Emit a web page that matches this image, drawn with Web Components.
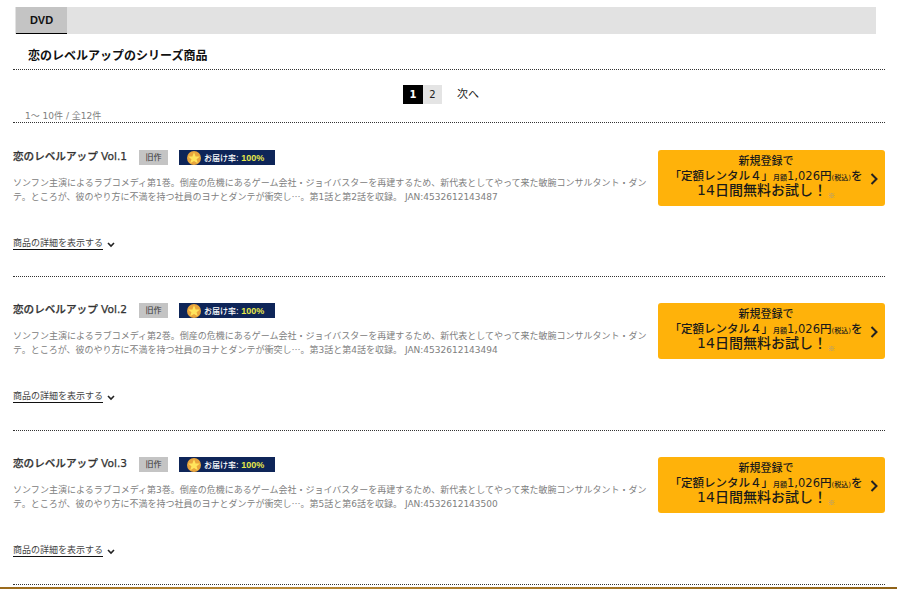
<!DOCTYPE html>
<html lang="ja">
<head>
<meta charset="utf-8">
<title>恋のレベルアップ</title>
<style>
  html, body { margin: 0; height: 589px; overflow: hidden; background: #fff; }
  body { font-family: "DejaVu Sans", "Noto Sans CJK JP", sans-serif; color: #222; }
  .cjk { font-family: "Noto Sans CJK JP", sans-serif; }
</style>
</head>
<body>
<series-page>
  <media-tabs slot="tabs" label="DVD"></media-tabs>
  <series-heading slot="heading">恋のレベルアップのシリーズ商品</series-heading>
  <page-nav slot="nav"></page-nav>
  <product-row title-text="恋のレベルアップ Vol.1">ソンフン主演によるラブコメディ第1巻。倒産の危機にあるゲーム会社・ジョイバスターを再建するため、新代表としてやって来た敏腕コンサルタント・ダン<br>テ。ところが、彼のやり方に不満を持つ社員のヨナとダンテが衝突し<span class="cjk">…</span>。第1話と第2話を収録。 JAN:4532612143487</product-row>
  <product-row title-text="恋のレベルアップ Vol.2">ソンフン主演によるラブコメディ第2巻。倒産の危機にあるゲーム会社・ジョイバスターを再建するため、新代表としてやって来た敏腕コンサルタント・ダン<br>テ。ところが、彼のやり方に不満を持つ社員のヨナとダンテが衝突し<span class="cjk">…</span>。第3話と第4話を収録。 JAN:4532612143494</product-row>
  <product-row title-text="恋のレベルアップ Vol.3">ソンフン主演によるラブコメディ第3巻。倒産の危機にあるゲーム会社・ジョイバスターを再建するため、新代表としてやって来た敏腕コンサルタント・ダン<br>テ。ところが、彼のやり方に不満を持つ社員のヨナとダンテが衝突し<span class="cjk">…</span>。第5話と第6話を収録。 JAN:4532612143500</product-row>
</series-page>

<script>
// ページ全体の枠
class SeriesPage extends HTMLElement {
  constructor() {
    super();
    this.attachShadow({ mode: "open" });
    this.shadowRoot.innerHTML = `
      <style>
        :host { display: flex; flex-direction: column; height: 589px; box-sizing: border-box; padding-top: 7px; }
        .list { padding: 0 12px 0 13px; flex: 1; }
        .band { height: 2px; background: linear-gradient(90deg, #9a6a1c, #b98a3a 30%, #8f6218); }
      </style>
      <slot name="tabs"></slot>
      <div class="list">
        <slot name="heading"></slot>
        <slot name="nav"></slot>
        <slot></slot>
      </div>
      <div class="band"></div>`;
  }
}

// タブバー
class MediaTabs extends HTMLElement {
  constructor() {
    super();
    this.attachShadow({ mode: "open" });
    this.shadowRoot.innerHTML = `
      <style>
        :host { display: flex; margin: 0 21px 0 15px; height: 27px; background: #e2e2e2; }
        .tab { width: 51px; margin-left: 1px; box-sizing: border-box; background: #c4c4c4; border-bottom: 1px solid #000;
          font: bold 11px/26px "Liberation Sans", sans-serif; color: #111; text-align: center; }
      </style>
      <div class="tab"></div>`;
    this.shadowRoot.querySelector(".tab").textContent = this.getAttribute("label");
  }
}

// シリーズ見出し
class SeriesHeading extends HTMLElement {
  constructor() {
    super();
    this.attachShadow({ mode: "open" });
    this.shadowRoot.innerHTML = `
      <style>
        :host { display: block; height: 36px; box-sizing: border-box; padding: 14px 0 0 15px;
          border-bottom: 1px dotted #333; font-size: 12px; line-height: 16px; font-weight: 700; color: #111; }
      </style>
      <slot></slot>`;
  }
}

// ページ送りと件数
class PageNav extends HTMLElement {
  constructor() {
    super();
    this.attachShadow({ mode: "open" });
    this.shadowRoot.innerHTML = `
      <style>
        :host { display: block; height: 53px; box-sizing: border-box; border-bottom: 1px dotted #333; padding-top: 15px; }
        .pages { display: flex; justify-content: center; align-items: center; height: 19px; font-size: 11px; padding-right: 16px; }
        .pages span { width: 20px; height: 19px; line-height: 19px; text-align: center; font-size: 10px; }
        .on { background: #000; color: #fff; font-weight: 700; }
        .off { background: #e4e4e4; color: #222; width: 19px !important; }
        .next { margin-left: 15px; font-size: 11px; line-height: 20px; height: 19px; color: #222; }
        .count { margin: 6px 0 0 12px; font-size: 9px; line-height: 13px; color: #808080; }
      </style>
      <div class="pages"><span class="on">1</span><span class="off">2</span><a class="next">次へ</a></div>
      <div class="count">1～ 10件 / 全12件</div>`;
  }
}

// 商品一行
class ProductRow extends HTMLElement {
  constructor() {
    super();
    this.attachShadow({ mode: "open" });
    this.shadowRoot.innerHTML = `
      <style>
        :host { display: flex; justify-content: space-between; height: 154px; box-sizing: border-box;
          border-bottom: 1px dotted #333; padding-top: 26px; }
        :host(:first-of-type) { padding-top: 27px; }
        .info { width: 640px; }
        .head { display: flex; align-items: flex-start; height: 15px; }
        h3 { margin: -1px 0 0; width: 116px; font-size: 10.6px; font-weight: 500; color: #333; line-height: 15px;
          white-space: nowrap; -webkit-text-stroke: .25px #333; }
        .old { margin-left: 10px; width: 29px; height: 15px; background: #c4c4c4; color: #333; font-size: 8px; line-height: 15px; text-align: center; }
        .rate { margin-left: 11px; width: 96px; height: 15px; background: #0e2558; color: #fff; display: flex; align-items: center;
          font-size: 8px; font-weight: 500; }
        .rate svg { margin: 0 3px 0 8px; flex: none; }
        .rate b { color: #e8e84a; font: bold 9px "Liberation Sans", sans-serif; }
        p { margin: 11px 0 0; width: 640px; font-size: 9px; line-height: 14px; color: #808080; }
        .more { display: flex; align-items: center; margin-top: 33px; font-size: 9px; line-height: 12px; color: #444; }
        .more a { border-bottom: 1px solid #111; }
        .more svg { margin: 2px 0 0 4px; }
        .cta { width: 227px; height: 56px; box-sizing: border-box; background: #ffb20a; border-radius: 3px;
          display: flex; align-items: center; color: #1a1a1a; text-align: center; font-weight: 500; }
        .txt { flex: 1; padding: 0 0 4px 4px; font-size: 11px; white-space: nowrap; }
        .txt div { height: 14px; line-height: 14px; }
        .wide { font-size: 11.5px; }
        .txt small { font-size: 7px; }
        .big { font-size: 14px; }
        .note { font-size: 7px; color: #999; vertical-align: -3px; margin-left: 1px; font-family: "Noto Sans CJK JP", sans-serif; }
        .cta svg { flex: none; margin: 2px 7px 0 0; }
      </style>
      <div class="info">
        <div class="head">
          <h3></h3>
          <span class="old">旧作</span>
          <span class="rate">
            <svg width="14" height="14" viewBox="0 0 13 13"><circle cx="6.5" cy="6.5" r="6.5" fill="#e9a53c"/><polygon points="6.5,1.2 8,5 12,5.2 8.9,7.6 10,11.4 6.5,9.2 3,11.4 4.1,7.6 1,5.2 5,5" fill="#ffe45c"/></svg>
            <span>お届け率: <b>100%</b></span>
          </span>
        </div>
        <p><slot></slot></p>
        <div class="more"><a>商品の詳細を表示する</a>
          <svg width="8" height="6" viewBox="0 0 8 6"><path d="M1 1l3 3 3-3" fill="none" stroke="#222" stroke-width="1.6"/></svg>
        </div>
      </div>
      <div class="cta">
        <div class="txt">
          <div>新規登録で</div>
          <div class="wide">「定額レンタル４」<small>月額</small>1,026円<small>(税込)</small>を</div>
          <div><span class="big">14日間無料お試し！</span><span class="note">※</span></div>
        </div>
        <svg width="8" height="12" viewBox="0 0 8 12"><path d="M1.5 1l5 5-5 5" fill="none" stroke="#222" stroke-width="2"/></svg>
      </div>`;
    this.shadowRoot.querySelector("h3").textContent = this.getAttribute("title-text");
  }
}

customElements.define("series-page", SeriesPage);
customElements.define("media-tabs", MediaTabs);
customElements.define("series-heading", SeriesHeading);
customElements.define("page-nav", PageNav);
customElements.define("product-row", ProductRow);
</script>
</body>
</html>
